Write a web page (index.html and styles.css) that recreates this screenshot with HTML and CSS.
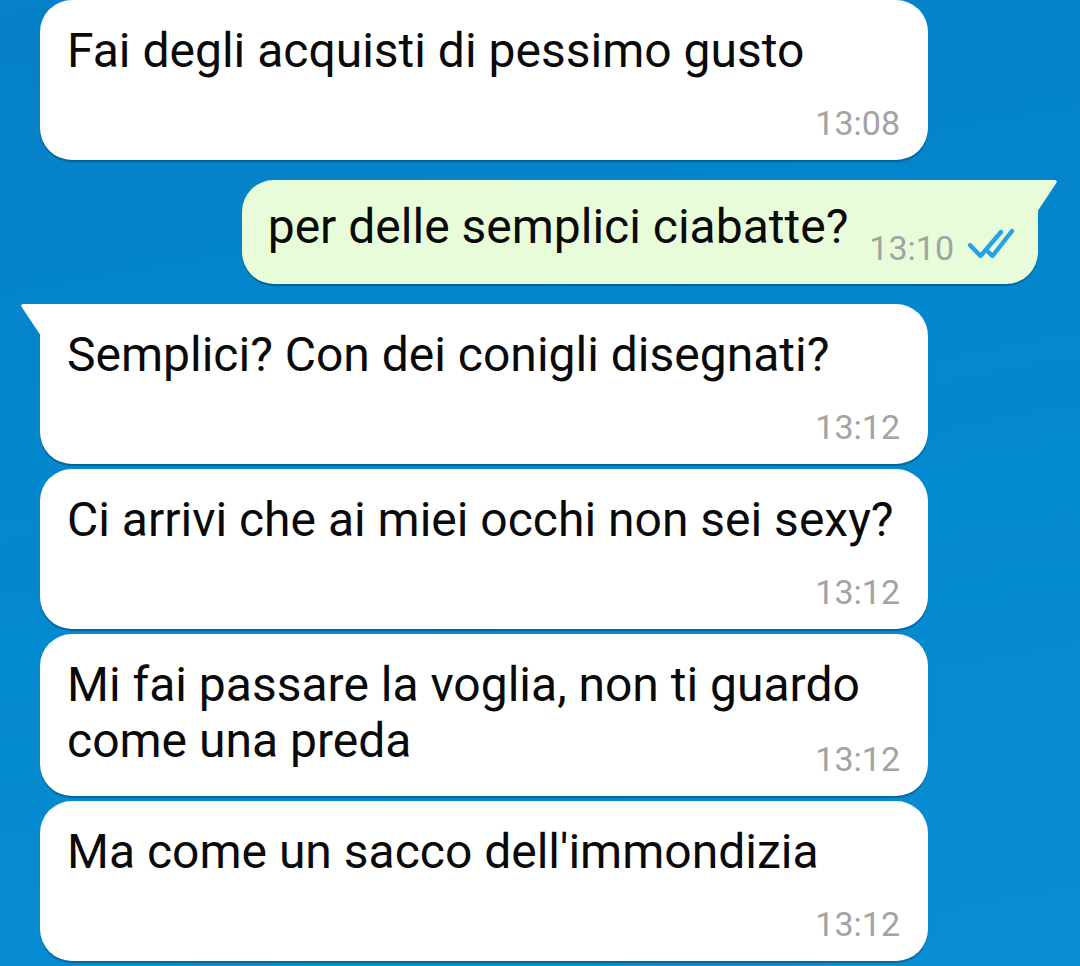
FILE: index.html
```html
<!DOCTYPE html>
<html lang="it">
<head>
    <meta charset="UTF-8">
    <meta name="viewport" content="width=device-width, initial-scale=1.0">
    <title>Chat</title>
    <link rel="stylesheet" href="styles.css">
</head>
<body>
    <div class="chat">
        <div class="msg in">
            <div class="text">Fai degli acquisti di pessimo gusto</div>
            <div class="time">13:08</div>
        </div>

        <div class="msg out">
            <svg class="tail tail-out" width="22" height="34" viewBox="0 0 22 34">
                <path d="M0 0 H17 Q21.5 0 19 3.5 L0 32 Z" fill="#e8fcda"/>
            </svg>
            <div class="text">per delle semplici ciabatte?</div>
            <div class="time">13:10</div>
            <svg class="check" width="48" height="32" viewBox="0 0 48 32">
                <path d="M4 17 L14.5 28 L35 4" fill="none" stroke="#27a2e6" stroke-width="4.4" stroke-linecap="round" stroke-linejoin="round"/>
                <path d="M21.5 23 L26.5 28 L46 3" fill="none" stroke="#27a2e6" stroke-width="4.4" stroke-linecap="round" stroke-linejoin="round"/>
            </svg>
        </div>

        <div class="msg in first">
            <svg class="tail tail-in" width="22" height="34" viewBox="0 0 22 34">
                <path d="M22 0 H5 Q0.5 0 3 3.5 L22 32 Z" fill="#ffffff"/>
            </svg>
            <div class="text">Semplici? Con dei conigli disegnati?</div>
            <div class="time">13:12</div>
        </div>
        <div class="msg in">
            <div class="text">Ci arrivi che ai miei occhi non sei sexy?</div>
            <div class="time">13:12</div>
        </div>
        <div class="msg in two">
            <div class="text">Mi fai passare la voglia, non ti guardo<br>come una preda</div>
            <div class="time">13:12</div>
        </div>
        <div class="msg in">
            <div class="text">Ma come un sacco dell'immondizia</div>
            <div class="time">13:12</div>
        </div>
        <div class="msg in short"></div>
    </div>
</body>
</html>
```

FILE: styles.css
```css
body {
    margin: 0;
    padding: 0;
    height: 966px;
    overflow: hidden;
    font-family: Roboto, "Noto Sans", sans-serif;
    background: linear-gradient(170deg, #0680c6 0%, #0389cf 55%, #0a8dd1 100%);
}
.chat {
    display: flex;
    flex-direction: column;
    align-items: flex-start;
}
.msg {
    position: relative;
    box-sizing: border-box;
    border-radius: 32px;
    box-shadow: 0 2px 1px rgba(0, 35, 70, 0.35);
}
.msg.in {
    width: 888px;
    margin-left: 40px;
    margin-top: 20px;
    padding: 22.5px 28px 17.5px 27px;
    background-color: #fff;
}
.msg.in:first-child {
    margin-top: 0;
}
.msg.in + .msg.in {
    margin-top: 5px;
}
.msg.in.first {
    border-top-left-radius: 0;
}
.msg.short {
    width: 600px;
    height: 120px;
}
.text {
    font-size: 48px;
    line-height: 56px;
    color: #0a0a0a;
}
.time {
    font-size: 34px;
    line-height: 40px;
    color: #a3a3a3;
    text-align: right;
    margin-top: 24px;
}
.msg.two .time {
    margin-top: -30px;
}
.msg.out {
    align-self: flex-end;
    display: flex;
    align-items: flex-start;
    margin-right: 42px;
    margin-top: 20px;
    padding: 18.5px 24px 29.5px 26px;
    background-color: #e8fcda;
    border-top-right-radius: 0;
}
.msg.out .time {
    margin-top: 29px;
    margin-bottom: -13px;
    margin-left: 21px;
}
.check {
    margin-top: 29px;
    margin-bottom: -6px;
    margin-left: 12px;
}
.tail {
    position: absolute;
    top: 0;
}
.tail-out {
    right: -21px;
}
.tail-in {
    left: -21px;
}
```
